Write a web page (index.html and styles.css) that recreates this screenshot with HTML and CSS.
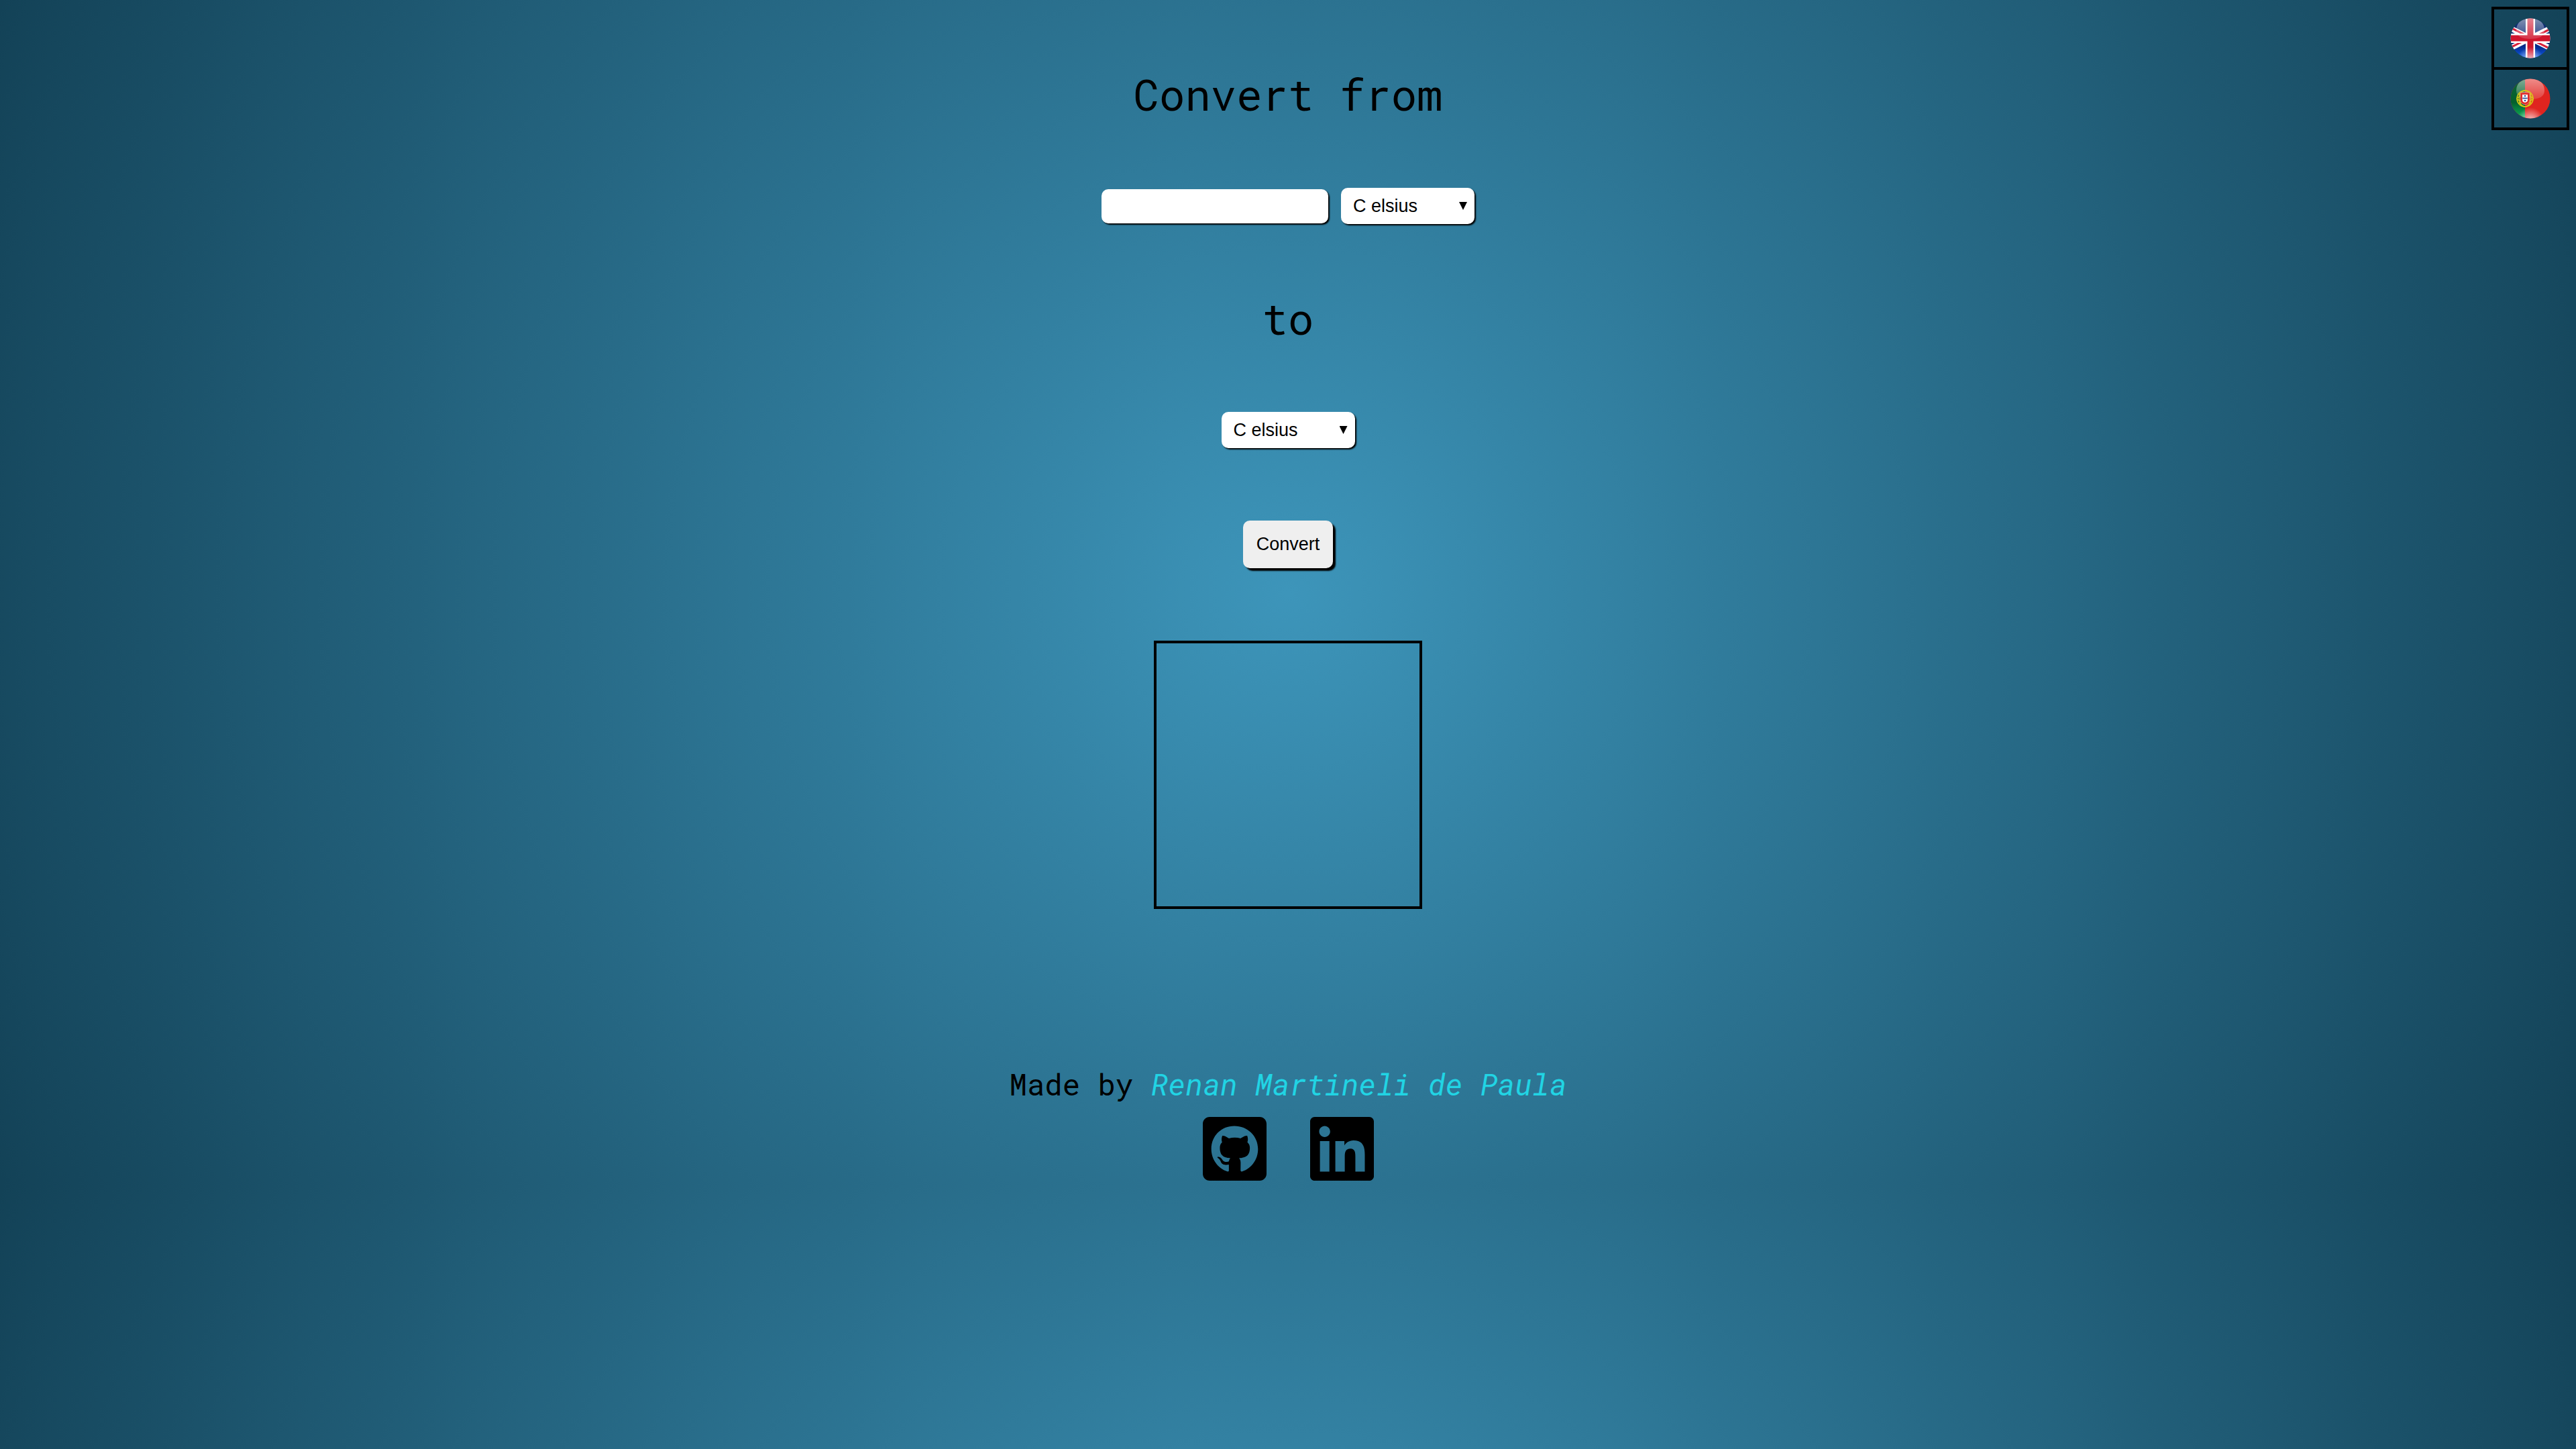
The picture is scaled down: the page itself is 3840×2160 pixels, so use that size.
FILE: index.html
```html
<!DOCTYPE html>
<html lang="en">
<head>
<meta charset="utf-8">
<meta name="viewport" content="width=device-width, initial-scale=1">
<title>Temperature converter</title>
<link rel="stylesheet" href="styles.css">
</head>
<body>
<nav class="languages" aria-label="Language">
  <button class="language" type="button" aria-label="English">
    <svg class="flag" viewBox="0 0 60 60" aria-hidden="true">
      <defs>
        <clipPath id="disc"><circle cx="30" cy="30" r="29.5"/></clipPath>
        <linearGradient id="gloss" x1="0" y1="0" x2="0" y2="1"><stop offset="0" stop-color="#fff" stop-opacity=".48"/><stop offset="1" stop-color="#fff" stop-opacity=".14"/></linearGradient>
        <radialGradient id="glow" cx=".5" cy="1.06" r=".34"><stop offset="0" stop-color="#fff" stop-opacity=".8"/><stop offset="1" stop-color="#fff" stop-opacity="0"/></radialGradient>
        <linearGradient id="blue" x1="0" y1="0" x2="0" y2="1"><stop offset="0" stop-color="#12306e"/><stop offset=".65" stop-color="#04237c"/><stop offset="1" stop-color="#0d5be8"/></linearGradient>
        <linearGradient id="green" x1="0" y1="0" x2="0" y2="1"><stop offset="0" stop-color="#0c6338"/><stop offset=".6" stop-color="#04602c"/><stop offset="1" stop-color="#0bb45c"/></linearGradient>
      </defs>
      <g clip-path="url(#disc)">
        <path fill="url(#blue)" d="M0 0h60v60H0z"/>
        <path stroke="#fff" stroke-width="8" d="M-6 12 66 48M66 12-6 48"/>
        <path stroke="#d8203a" stroke-width="3" d="M-6 11 26 27M66 13 34 29M-6 47 26 31M66 49 34 33"/>
        <path stroke="#fff" stroke-width="14" d="M30 0v60M0 30h60"/>
        <path stroke="#d0142c" stroke-width="9" d="M30 0v60M0 30h60"/>
        <path fill="url(#gloss)" d="M9 18C9 5 20 0 30 0s21 5 21 18c0 9-8 13-21 13S9 27 9 18z"/>
        <path fill="url(#glow)" d="M0 0h60v60H0z"/>
      </g>
    </svg>
  </button>
  <button class="language" type="button" aria-label="Português">
    <svg class="flag" viewBox="0 0 60 60" aria-hidden="true">
      <g clip-path="url(#disc)">
        <path fill="#e0241f" d="M0 0h60v60H0z"/>
        <path fill="url(#green)" d="M0 0h22v60H0z"/>
        <path fill="url(#gloss)" d="M9 18C9 5 20 0 30 0s21 5 21 18c0 9-8 13-21 13S9 27 9 18z"/>
        <path fill="url(#glow)" d="M0 0h60v60H0z"/>
        <g fill="none" stroke="#d8c816" stroke-width="1.600"><circle cx="22" cy="30" r="12"/><ellipse cx="22" cy="30" rx="12" ry="4"/><ellipse cx="22" cy="30" rx="9" ry="12"/><path d="M12 23q10 4 20 0M12 37q10-4 20 0"/></g>
        <path fill="#e02a28" stroke="#e8a898" stroke-width=".8" d="M15 21h14v11c0 9-14 9-14 0z"/>
        <path fill="#fff" d="M18 24h8v8c0 5-8 5-8 0z"/>
        <path fill="#123a8c" d="M21 25h2v2h-2zM18.500 28.500h2v2h-2zM23.500 28.500h2v2h-2zM21 28.500h2v2h-2zM21 32h2v2h-2z"/>
      </g>
    </svg>
  </button>
</nav>

<main class="converter">
  <h1 class="heading"><label for="amount">Convert from</label></h1>
  <div class="row">
    <input class="amount" id="amount" type="text" inputmode="decimal">
    <span class="picker">
      <select class="unit" aria-label="Convert from unit"><option>C elsius</option><option>F ahrenheit</option><option>K elvin</option></select>
    </span>
  </div>
  <h1 class="heading"><label for="target">to</label></h1>
  <div class="row">
    <span class="picker">
      <select class="unit" id="target"><option>C elsius</option><option>F ahrenheit</option><option>K elvin</option></select>
    </span>
  </div>
  <button class="convert" type="button">Convert</button>
  <output class="result" aria-label="Result"></output>
</main>

<footer class="footer">
  <p class="credit">Made by <em class="author">Renan Martineli de Paula</em></p>
  <div class="social">
    <a class="social-link" href="#github" aria-label="GitHub">
      <svg class="logo" viewBox="0 32 448 448" aria-hidden="true"><path d="M400 32H48C21.500 32 0 53.500 0 80v352c0 26.500 21.500 48 48 48h352c26.500 0 48-21.500 48-48V80c0-26.500-21.500-48-48-48zM277.300 415.700c-8.400 1.500-11.500-3.700-11.500-8 0-5.400.2-33 .2-55.300 0-15.600-5.200-25.500-11.300-30.700 37-4.100 76-9.200 76-73.100 0-18.200-6.500-27.300-17.100-39 1.700-4.300 7.400-22-1.700-45-13.900-4.300-45.700 17.900-45.700 17.900-13.200-3.700-27.500-5.600-41.600-5.600-14.100 0-28.400 1.900-41.600 5.600 0 0-31.800-22.200-45.700-17.900-9.100 22.900-3.500 40.600-1.700 45-10.600 11.700-15.600 20.800-15.600 39 0 63.600 37.300 69 74.300 73.100-4.800 4.300-9.100 11.700-10.600 22.300-9.500 4.300-33.800 11.700-48.300-13.900-9.100-15.800-25.500-17.100-25.500-17.100-16.200-.2-1.100 10.200-1.100 10.200 10.800 5 18.400 24.200 18.400 24.200 9.700 29.700 56.100 19.700 56.100 19.700 0 13.900.2 36.500.2 40.600 0 4.300-3 9.500-11.500 8-66-22.100-112.200-84.900-112.200-158.300 0-91.800 70.200-161.500 162-161.500S388 165.600 388 257.400c.1 73.400-44.700 136.300-110.700 158.300z"/></svg>
    </a>
    <a class="social-link" href="#linkedin" aria-label="LinkedIn">
      <svg class="logo" viewBox="0 32 448 448" aria-hidden="true"><path d="M416 32H31.900C14.300 32 0 46.500 0 64.300v383.400C0 465.500 14.300 480 31.900 480H416c17.600 0 32-14.500 32-32.300V64.300c0-17.800-14.400-32.300-32-32.300zM135.400 416H69V202.200h66.500V416zm-33.200-243c-21.300 0-38.500-17.300-38.500-38.500S80.900 96 102.200 96c21.200 0 38.500 17.300 38.500 38.500 0 21.300-17.200 38.500-38.500 38.500zm282.100 243h-66.400V312c0-24.800-.5-56.700-34.500-56.700-34.600 0-39.900 27-39.900 54.900V416h-66.400V202.200h63.700v29.200h.9c8.900-16.800 30.600-34.500 62.900-34.500 67.200 0 79.700 44.300 79.700 101.900V416z"/></svg>
    </a>
  </div>
</footer>
</body>
</html>
```
FILE: styles.css
```css
* {
  box-sizing: border-box;
}

body {
  margin: 0;
  padding: 98px 0 6px;
  font-family: "Roboto Mono", "Liberation Mono", monospace;
  font-size: 44px;
  color: #000;
  background: radial-gradient(circle, #3d95ba, #134257);
}

.languages {
  position: absolute;
  top: 10px;
  right: 10px;
  display: flex;
  flex-direction: column;
  border: 4px solid #000;
}

.language {
  display: flex;
  padding: 13px 24px;
  border: 0;
  background: none;
  cursor: pointer;
}

.language + .language {
  border-top: 4px solid #000;
}

.flag {
  width: 60px;
  height: 60px;
}

.converter {
  display: flex;
  flex-direction: column;
  align-items: center;
}

.heading {
  margin: 0;
  font-size: 64px;
  line-height: 84px;
  font-weight: 400;
}

.row {
  display: flex;
  align-items: center;
  gap: 19px;
  margin: 98px 0;
}

.amount,
.unit,
.convert {
  font-family: "Liberation Sans", Arial, sans-serif;
  font-size: 27px;
  color: #000;
  border: 0;
  border-radius: 10px;
}

.amount,
.unit {
  background: #fff;
  box-shadow: 2px 2px 2px #000;
}

.amount {
  width: 338px;
  height: 51px;
  padding: 0 12px;
}

.picker {
  position: relative;
  display: flex;
}

.picker::after {
  content: "";
  position: absolute;
  top: 21px;
  right: 11px;
  width: 12px;
  height: 12px;
  background: #000;
  clip-path: polygon(0 0, 100% 0, 50% 100%);
  pointer-events: none;
}

.unit {
  width: 199px;
  height: 54px;
  padding: 0 18px;
  appearance: none;
}

.convert {
  margin-top: 10px;
  padding: 20px;
  line-height: 31px;
  background: #efefef;
  box-shadow: 4px 4px 2px #000;
}

.result {
  width: 400px;
  height: 400px;
  margin-top: 108px;
  border: 4px solid #000;
}

.footer {
  display: flex;
  flex-direction: column;
  align-items: center;
  margin-top: 232px;
}

.credit {
  margin: 0;
  line-height: 58px;
}

.author {
  color: #21d4e4;
}

.social {
  display: flex;
  gap: 65px;
  margin-top: 20px;
}

.social-link {
  display: flex;
  color: #000;
}

.logo {
  width: 95px;
  height: 95px;
  fill: currentColor;
}
```
